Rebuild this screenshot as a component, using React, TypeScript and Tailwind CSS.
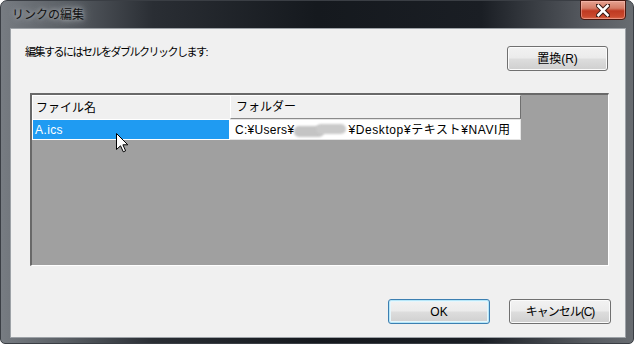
import React from 'react';

const jp = "font-['Liberation_Sans','Noto_Sans_CJK_JP',sans-serif]";

function WinButton({ label, width, focused = false, tight = false }: { label: string; width: string; focused?: boolean; tight?: boolean }) {
  return (
    <div
      className={`${width} h-[25px] rounded-[3px] border ${
        focused
          ? 'border-[#3c7fb1] shadow-[inset_0_0_0_1px_#b6e6f8,inset_0_0_0_2px_#e6f6fc]'
          : 'border-[#707070] shadow-[inset_0_0_0_1px_#fbfbfb]'
      } bg-[linear-gradient(to_bottom,#f2f2f2_0%,#ebebeb_48%,#dddddd_52%,#cfcfcf_100%)] flex items-center justify-center text-[12px] leading-[14px] text-black ${
        tight ? 'tracking-[-1px]' : ''
      }`}
    >
      {label}
    </div>
  );
}

export default function App() {
  return (
    <div className={`w-[634px] h-[347px] bg-white relative ${jp}`}>
      <div className="w-[634px] h-[344px] rounded-t-[7px] rounded-b-[5px] border border-[#3a3e44] bg-[linear-gradient(90deg,#777c82_0%,#5a5f65_10%,#2a2e34_24%,#15191e_50%,#1a1e24_76%,#54585e_92%,#686c71_100%)] flex flex-col pl-[9px] pr-[7px] pb-[5px]">
        {/* title bar */}
        <div className="h-[27px] flex justify-between items-start">
          <span className="mt-[6px] ml-[2px] text-[12px] leading-[16px] text-[#111] [text-shadow:0_0_5px_rgba(210,214,218,0.95),0_0_12px_rgba(170,175,180,0.85)]">
            リンクの編集
          </span>
          <div className="-mt-px w-[46px] h-[20px] rounded-b-[4px] border border-[#4a1810] bg-[linear-gradient(to_bottom,#e6a291_0%,#d57b66_40%,#bf3a22_55%,#c9482d_85%,#d86a4c_100%)] shadow-[inset_0_0_0_1px_rgba(255,200,190,0.45)] flex items-center justify-center">
            <svg width="14" height="13" viewBox="0 0 14 13">
              <path d="M2 1.5 L12 11.5 M12 1.5 L2 11.5" stroke="#3a1a14" strokeWidth="4.6" strokeLinecap="square" />
              <path d="M2.4 1.9 L11.6 11.1 M11.6 1.9 L2.4 11.1" stroke="#ffffff" strokeWidth="2.6" strokeLinecap="square" />
            </svg>
          </div>
        </div>

        {/* client area */}
        <div className="flex-1 bg-[#f0f0f0] border border-[#9da2a7] flex flex-col">
          <div className="flex justify-between items-start pt-[16px] pl-[14px] pr-[17px]">
            <span className="text-[11px] leading-[14px] tracking-[-1.5px] text-black">編集するにはセルをダブルクリックします:</span>
            <div className="mt-px">
              <WinButton label="置換(R)" width="w-[101px]" />
            </div>
          </div>

          {/* grid */}
          <div className="mt-[22px] ml-[19px] mr-[16px] h-[173px] bg-[#a0a0a0] border-t-2 border-l-2 border-b border-r border-t-[#696969] border-l-[#696969] border-b-white border-r-white">
            <div className="flex h-[24px]">
              <div className="w-[198px] bg-[#f0f0f0] border-t border-l border-white flex items-center pl-[3px] text-[12px] text-black">
                ファイル名
              </div>
              <div className="w-[291px] bg-[#f0f0f0] border-t border-l border-white border-r border-r-[#6f6f6f] border-b border-b-[#8a8a8a] flex items-center pl-[5px] text-[12px] text-black">
                フォルダー
              </div>
            </div>
            <div className="flex h-[21px]">
              <div className="w-[198px] border border-white bg-[#1f9bf2] flex items-center pl-[2px] text-[12px] tracking-[0.4px] text-white">
                A.ics
              </div>
              <div className="w-[291px] border border-l-0 border-[#e4e4e4] bg-white flex items-center pl-[5px] text-[12px] text-black whitespace-nowrap">
                <span className="tracking-[0.3px]">C:¥Users¥</span>
                <span className="relative inline-block w-[54px] h-[14px] mt-[2px]">
                  <span className="absolute left-0 top-[2px] w-[30px] h-[11px] rounded-[5px] bg-[#c4c4c4] blur-[1px]" />
                  <span className="absolute left-[22px] top-0 w-[30px] h-[10px] rounded-[5px] bg-[#cacaca] blur-[1px]" />
                </span>
                <span className="tracking-[0.6px]">¥Desktop¥テキスト¥NAVI用</span>
              </div>
            </div>
          </div>

          <div className="mt-[33px] flex justify-end gap-[19px] pr-[14px]">
            <WinButton label="OK" width="w-[102px]" focused />
            <WinButton label="キャンセル(C)" width="w-[102px]" tight />
          </div>
        </div>
      </div>

      {/* mouse cursor */}
      <svg className="absolute left-[116px] top-[133px]" width="13" height="20" viewBox="0 0 13 20">
        <path d="M0.5 0.5 L0.5 16.5 L4.5 12.8 L7.3 18.8 L9.6 17.8 L6.9 11.8 L11.8 11.8 Z" fill="#ffffff" stroke="#000000" strokeWidth="1" strokeLinejoin="miter" />
      </svg>
    </div>
  );
}
